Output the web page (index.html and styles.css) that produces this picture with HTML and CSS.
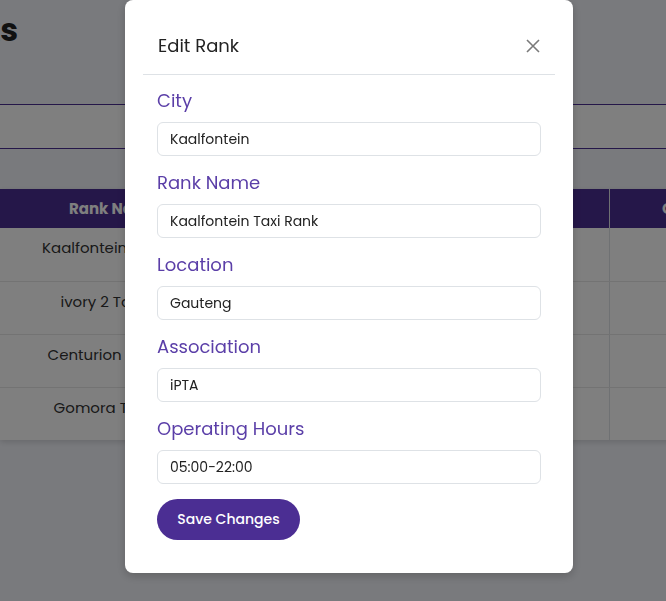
FILE: index.html
```html
<!DOCTYPE html>
<html lang="en">
<head>
<meta charset="utf-8">
<title>Edit Rank</title>
<link rel="stylesheet" href="styles.css">
</head>
<body>
<div class="page">
  <div class="title-wrap"><h1 class="title">Taxi Ranks</h1></div>
  <div class="bar"></div>
  <table class="ranks">
    <thead>
      <tr><th class="c1">Rank Name</th><th class="c2">Location</th><th class="c3">Association</th><th class="c4">Operating Hours</th></tr>
    </thead>
    <tbody>
      <tr><td>Kaalfontein Taxi Rank</td><td>Gauteng</td><td>iPTA</td><td class="sep">05:00-22:00</td></tr>
      <tr><td>ivory 2 Taxi Rank</td><td>Gauteng</td><td>iPTA</td><td class="sep">05:00-22:00</td></tr>
      <tr><td>Centurion Taxi Rank</td><td>Gauteng</td><td>iPTA</td><td class="sep">05:00-22:00</td></tr>
      <tr><td>Gomora Taxi Rank</td><td>Gauteng</td><td>iPTA</td><td class="sep">05:00-22:00</td></tr>
    </tbody>
  </table>
</div>
<div class="backdrop"></div>
<div class="modal-wrap">
  <div class="modal">
    <div class="modal-header">
      <h2 class="modal-title">Edit Rank</h2>
      <button class="close" aria-label="Close">
        <svg width="14" height="14" viewBox="0 0 14 14"><path d="M1 1 L13 13 M13 1 L1 13" stroke="#7a7a7a" stroke-width="1.6" fill="none"/></svg>
      </button>
    </div>
    <form class="modal-body">
      <div class="group"><label class="lbl">City</label><input class="field" value="Kaalfontein"></div>
      <div class="group"><label class="lbl">Rank Name</label><input class="field" value="Kaalfontein Taxi Rank"></div>
      <div class="group"><label class="lbl">Location</label><input class="field" value="Gauteng"></div>
      <div class="group"><label class="lbl">Association</label><input class="field" value="iPTA"></div>
      <div class="group"><label class="lbl">Operating Hours</label><input class="field" value="05:00-22:00"></div>
      <button type="button" class="save">Save Changes</button>
    </form>
  </div>
</div>
</body>
</html>
```
FILE: styles.css
```css
html, body {
  margin: 0;
  padding: 0;
  height: 100%;
  overflow: hidden;
}
body {
  background: #f3f5fb;
  font-family: "Poppins", "Inter", "Open Sans", sans-serif;
  color: #333;
}
.page {
  width: 850px;
}
.title-wrap {
  width: 18px;
  display: flex;
  justify-content: flex-end;
  padding-top: 6px;
}
.title {
  margin: 0;
  font-size: 32px;
  line-height: 48px;
  font-weight: 700;
  white-space: nowrap;
  color: #222;
}
.bar {
  margin-top: 50px;
  height: 43px;
  background: #fff;
  border-top: 1px solid #4b2e93;
  border-bottom: 1px solid #4b2e93;
}
.ranks {
  margin-top: 40px;
  border-collapse: collapse;
  table-layout: fixed;
  width: 841px;
  background: #fff;
  box-shadow: 0 2px 6px rgba(0,0,0,0.15);
  font-size: 15px;
}
.ranks th {
  background: #4b2e93;
  color: #fff;
  font-weight: 700;
  height: 39px;
  padding: 0 8px;
  text-align: center;
  white-space: nowrap;
}
.ranks td {
  height: 53px;
  padding: 9px 8px 0;
  vertical-align: top;
  text-align: center;
  line-height: 22px;
  color: #333;
  border-bottom: 1px solid #e6e6e6;
  box-sizing: border-box;
  white-space: nowrap;
}
.ranks tr:last-child td { border-bottom: none; }
.ranks th.c1 { width: 211px; padding-right: 24px; }
.c2 { width: 162px; }
.c3 { width: 172px; }
.c4 { width: 215px; border-left: 1px solid #dee2e6; }
.ranks td.sep { border-left: 1px solid #dee2e6; }

.backdrop {
  position: fixed;
  inset: 0;
  background: rgba(0,0,0,0.5);
}
.modal-wrap {
  position: fixed;
  inset: 0;
  padding-left: 125px;
}
.modal {
  width: 448px;
  background: #fff;
  border-radius: 8px;
  box-shadow: 0 3px 10px rgba(0,0,0,0.2);
}
.modal-header {
  margin: 0 18px;
  padding: 32px 15px 15px 15px;
  border-bottom: 1px solid #dee2e6;
  display: flex;
  align-items: center;
  justify-content: space-between;
}
.modal-title {
  margin: 0;
  font-size: 18px;
  line-height: 27px;
  font-weight: 400;
  color: #222;
}
.close {
  border: none;
  background: none;
  padding: 0;
  width: 14px;
  height: 14px;
  display: flex;
}
.modal-body {
  padding: 12px 32px 33px;
  display: flex;
  flex-direction: column;
  align-items: flex-start;
}
.group {
  display: flex;
  flex-direction: column;
  gap: 8px;
  width: 100%;
  margin-bottom: 13px;
}
.group:last-of-type { margin-bottom: 15px; }
.lbl {
  font-size: 18px;
  line-height: 27px;
  color: #5b3fa8;
}
.field {
  box-sizing: border-box;
  width: 100%;
  height: 34px;
  border: 1px solid #dee2e6;
  border-radius: 6px;
  padding: 0 12px;
  font-family: inherit;
  font-size: 14px;
  color: #222;
  background: #fff;
  outline: none;
}
.save {
  height: 41px;
  width: 143px;
  border: none;
  border-radius: 21px;
  background: #4b2e93;
  color: #fff;
  font-family: inherit;
  font-size: 14px;
  font-weight: 500;
  padding: 0;
}
```
